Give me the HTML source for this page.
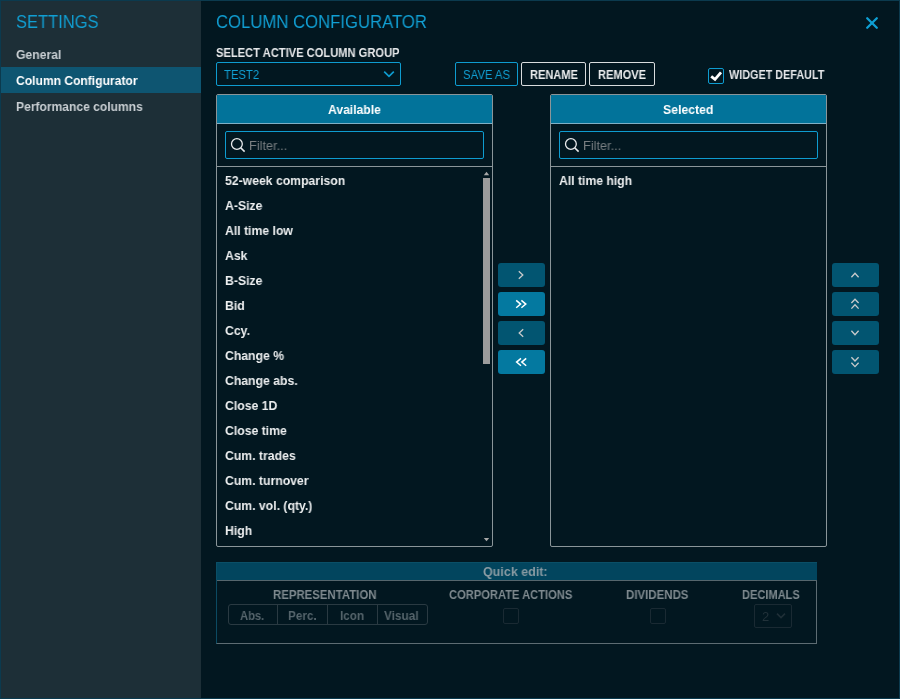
<!DOCTYPE html>
<html><head><meta charset="utf-8">
<style>
*{box-sizing:border-box;margin:0;padding:0}
html,body{width:900px;height:699px;overflow:hidden;background:#021720}
body{position:relative;font-family:"Liberation Sans",sans-serif}
#frame{position:absolute;left:0;top:0;width:900px;height:699px;border:1px solid #0b3a4e}
.a{position:absolute}
.t{position:absolute;white-space:nowrap;line-height:1;transform-origin:0 0;will-change:transform}
.b{font-weight:700}
#side{position:absolute;left:1px;top:1px;width:200px;height:697px;background:#1d2f37}
.panel{position:absolute;top:94px;width:277px;height:453px;border:1px solid #8a9599;border-radius:2px;overflow:hidden}
.phead{position:absolute;left:0;top:0;right:0;height:29px;background:#02739a;border-bottom:1px solid #7fb0c6}
.psep{position:absolute;left:0;right:0;top:71px;height:1px;background:#8a9599}
.filter{position:absolute;top:36px;left:8px;width:259px;height:28px;border:1px solid #0e9cd0;border-radius:2px}
.mbtn svg{display:block}
.mbtn{position:absolute;width:47px;height:24px;border-radius:3px;background:#025571}
.mbtn.on{background:#0479a0}
#list1 .t{transform:scaleX(.94)}
</style></head><body>
<div id="side"></div>
<div class="a" style="left:1px;top:67px;width:200px;height:26px;background:#0e5571"></div>
<div id="frame"></div>

<!-- sidebar texts -->
<span class="t" id="t_settings" style="transform:scaleX(0.917);left:16px;top:13px;font-size:18px;color:#119fd3">SETTINGS</span>
<span class="t b" id="t_general" style="transform:scaleX(0.938);left:16px;top:48px;font-size:13px;color:#c9cfd3">General</span>
<span class="t b" id="t_colconf" style="transform:scaleX(0.929);left:16px;top:74px;font-size:13px;color:#ffffff">Column Configurator</span>
<span class="t b" id="t_perf" style="transform:scaleX(0.929);left:16px;top:100px;font-size:13px;color:#c9cfd3">Performance columns</span>

<!-- main header -->
<span class="t" id="t_title" style="transform:scaleX(0.928);left:216px;top:13px;font-size:18px;color:#119fd3">COLUMN CONFIGURATOR</span>
<svg class="a" style="left:864px;top:15px" width="16" height="16" viewBox="0 0 16 16"><path d="M3.2 3.2L12.8 12.8M12.8 3.2L3.2 12.8" stroke="#0e9fd3" stroke-width="2.3" stroke-linecap="round"/></svg>

<span class="t b" id="t_select" style="transform:scaleX(0.929);left:216px;top:47px;font-size:12px;color:#e6e8ea">SELECT ACTIVE COLUMN GROUP</span>
<div class="a" style="left:216px;top:62px;width:185px;height:24px;border:1px solid #0e9cd0;border-radius:2px"></div>
<span class="t" id="t_test2" style="transform:scaleX(0.868);left:224px;top:68px;font-size:13px;color:#119fd3">TEST2</span>
<svg class="a" style="left:383px;top:69px" width="12" height="9" viewBox="0 0 12 9"><path d="M1.2 2.6L6 7.3L10.8 2.6" fill="none" stroke="#0e9cd0" stroke-width="1.7"/></svg>

<div class="a" style="left:455px;top:62px;width:63px;height:24px;border:1px solid #0e9cd0;border-radius:2px"></div>
<span class="t" id="t_saveas" style="transform:scaleX(0.874);left:463px;top:68px;font-size:13px;color:#119fd3">SAVE AS</span>
<div class="a" style="left:521px;top:62px;width:65px;height:24px;border:1px solid #d8dcde;border-radius:2px"></div>
<span class="t b" id="t_rename" style="transform:scaleX(0.921);left:530px;top:69px;font-size:12px;color:#eceeef">RENAME</span>
<div class="a" style="left:589px;top:62px;width:66px;height:24px;border:1px solid #d8dcde;border-radius:2px"></div>
<span class="t b" id="t_remove" style="transform:scaleX(0.923);left:598px;top:69px;font-size:12px;color:#eceeef">REMOVE</span>

<div class="a" style="left:708px;top:68px;width:16px;height:16px;border:1px solid #0e9cd0;border-radius:2px"></div>
<svg class="a" style="left:708px;top:68px" width="16" height="16" viewBox="0 0 16 16"><path d="M3.2 8.3L7 11.4L13 4.3" fill="none" stroke="#ffffff" stroke-width="2.8"/></svg>
<span class="t b" id="t_widget" style="transform:scaleX(0.901);left:729px;top:69px;font-size:12px;color:#e6e8ea">WIDGET DEFAULT</span>

<!-- Available panel -->
<div class="panel" style="left:216px">
  <div class="phead"></div>
  <div class="filter"></div>
  <div class="psep"></div>
</div>
<span class="t b" id="t_avail" style="transform:scaleX(0.935);left:328px;top:103px;font-size:13px;color:#ffffff">Available</span>
<svg class="a" style="left:229px;top:136px" width="18" height="18" viewBox="0 0 18 18"><circle cx="7.9" cy="8" r="5.4" fill="none" stroke="#e8eaec" stroke-width="1.3"/><path d="M11.8 11.9L15.6 15.6" stroke="#e8eaec" stroke-width="1.5"/></svg>
<span class="t" id="t_filter1" style="transform:scaleX(0.98);left:249px;top:139px;font-size:13px;color:#7a7f82">Filter...</span>

<div class="a" style="left:483px;top:178px;width:7px;height:186px;background:#9c9c9c"></div>
<svg class="a" style="left:483px;top:171px" width="7" height="5" viewBox="0 0 7 5"><path d="M0.8 4.2L3.5 0.8L6.2 4.2Z" fill="#a8a8a8"/></svg>
<svg class="a" style="left:483px;top:537px" width="7" height="5" viewBox="0 0 7 5"><path d="M0.8 1L3.5 4.2L6.2 1Z" fill="#a8a8a8"/></svg>

<div id="list1">
<span class="t b" style="left:225px;top:174px;font-size:13px;color:#eef0f1">52-week comparison</span>
<span class="t b" style="left:225px;top:199px;font-size:13px;color:#eef0f1">A-Size</span>
<span class="t b" style="left:225px;top:224px;font-size:13px;color:#eef0f1">All time low</span>
<span class="t b" style="left:225px;top:249px;font-size:13px;color:#eef0f1">Ask</span>
<span class="t b" style="left:225px;top:274px;font-size:13px;color:#eef0f1">B-Size</span>
<span class="t b" style="left:225px;top:299px;font-size:13px;color:#eef0f1">Bid</span>
<span class="t b" style="left:225px;top:324px;font-size:13px;color:#eef0f1">Ccy.</span>
<span class="t b" style="left:225px;top:349px;font-size:13px;color:#eef0f1">Change %</span>
<span class="t b" style="left:225px;top:374px;font-size:13px;color:#eef0f1">Change abs.</span>
<span class="t b" style="left:225px;top:399px;font-size:13px;color:#eef0f1">Close 1D</span>
<span class="t b" style="left:225px;top:424px;font-size:13px;color:#eef0f1">Close time</span>
<span class="t b" style="left:225px;top:449px;font-size:13px;color:#eef0f1">Cum. trades</span>
<span class="t b" style="left:225px;top:474px;font-size:13px;color:#eef0f1">Cum. turnover</span>
<span class="t b" style="left:225px;top:499px;font-size:13px;color:#eef0f1">Cum. vol. (qty.)</span>
<span class="t b" style="left:225px;top:524px;font-size:13px;color:#eef0f1">High</span>
</div>

<!-- move buttons -->
<div class="mbtn" style="left:498px;top:263px"><svg width="47" height="24" viewBox="0 0 47 24"><path d="M20.8 8.3L24.8 12L20.8 15.7" fill="none" stroke="#c9cbcc" stroke-width="1.3"/></svg></div>
<div class="mbtn on" style="left:498px;top:292px"><svg width="47" height="24" viewBox="0 0 47 24"><path d="M18.2 8.4L22.6 12.1L18.2 15.8M23.4 8.4L27.8 12.1L23.4 15.8" fill="none" stroke="#ffffff" stroke-width="1.5"/></svg></div>
<div class="mbtn" style="left:498px;top:321px"><svg width="47" height="24" viewBox="0 0 47 24"><path d="M25.2 8.3L21.2 12L25.2 15.7" fill="none" stroke="#c9cbcc" stroke-width="1.3"/></svg></div>
<div class="mbtn on" style="left:498px;top:350px"><svg width="47" height="24" viewBox="0 0 47 24"><path d="M23 8.4L18.6 12.1L23 15.8M28.2 8.4L23.8 12.1L28.2 15.8" fill="none" stroke="#ffffff" stroke-width="1.5"/></svg></div>

<!-- Selected panel -->
<div class="panel" style="left:550px">
  <div class="phead"></div>
  <div class="filter"></div>
  <div class="psep"></div>
</div>
<span class="t b" id="t_sel" style="transform:scaleX(0.943);left:663px;top:103px;font-size:13px;color:#ffffff">Selected</span>
<svg class="a" style="left:563px;top:136px" width="18" height="18" viewBox="0 0 18 18"><circle cx="7.9" cy="8" r="5.4" fill="none" stroke="#e8eaec" stroke-width="1.3"/><path d="M11.8 11.9L15.6 15.6" stroke="#e8eaec" stroke-width="1.5"/></svg>
<span class="t" id="t_filter2" style="transform:scaleX(0.98);left:583px;top:139px;font-size:13px;color:#7a7f82">Filter...</span>
<span class="t b" id="t_ath" style="transform:scaleX(0.938);left:559px;top:174px;font-size:13px;color:#eef0f1">All time high</span>

<!-- order buttons -->
<div class="mbtn" style="left:832px;top:263px"><svg width="47" height="24" viewBox="0 0 47 24"><path d="M19.4 14.2L23 10.2L26.6 14.2" fill="none" stroke="#c9cbcc" stroke-width="1.3"/></svg></div>
<div class="mbtn" style="left:832px;top:292px"><svg width="47" height="24" viewBox="0 0 47 24"><path d="M19.4 11L23 7.2L26.6 11M19.4 16.6L23 12.8L26.6 16.6" fill="none" stroke="#c9cbcc" stroke-width="1.3"/></svg></div>
<div class="mbtn" style="left:832px;top:321px"><svg width="47" height="24" viewBox="0 0 47 24"><path d="M19.4 9.8L23 13.8L26.6 9.8" fill="none" stroke="#c9cbcc" stroke-width="1.3"/></svg></div>
<div class="mbtn" style="left:832px;top:350px"><svg width="47" height="24" viewBox="0 0 47 24"><path d="M19.4 7.2L23 11L26.6 7.2M19.4 12.8L23 16.6L26.6 12.8" fill="none" stroke="#c9cbcc" stroke-width="1.3"/></svg></div>

<!-- Quick edit -->
<div class="a" style="left:216px;top:562px;width:601px;height:82px;border:1px solid #5d6c73;border-top:none;border-left-color:#0b4a62"></div>
<div class="a" style="left:216px;top:562px;width:601px;height:18px;background:#02455e;border-top:1px solid #0a4f67;border-left:1px solid #0a4f67"></div>
<div class="a" style="left:217px;top:580px;width:600px;height:1px;background:#56666d"></div>
<span class="t b" id="t_qe" style="transform:scaleX(0.961);left:483px;top:565px;font-size:13px;color:#8a9ba3">Quick edit:</span>
<span class="t b" id="t_rep" style="transform:scaleX(0.95);left:273px;top:589px;font-size:12px;color:#7f8a8f">REPRESENTATION</span>
<span class="t b" id="t_corp" style="transform:scaleX(0.929);left:449px;top:589px;font-size:12px;color:#7f8a8f">CORPORATE ACTIONS</span>
<span class="t b" id="t_div" style="transform:scaleX(0.956);left:626px;top:589px;font-size:12px;color:#7f8a8f">DIVIDENDS</span>
<span class="t b" id="t_dec" style="transform:scaleX(0.921);left:742px;top:589px;font-size:12px;color:#7f8a8f">DECIMALS</span>
<div class="a" style="left:228px;top:604px;width:200px;height:21px;border:1px solid #2a3a42;border-radius:3px"></div>
<div class="a" style="left:277px;top:605px;width:1px;height:19px;background:#2a3a42"></div>
<div class="a" style="left:327px;top:605px;width:1px;height:19px;background:#2a3a42"></div>
<div class="a" style="left:377px;top:605px;width:1px;height:19px;background:#2a3a42"></div>
<span class="t b" id="t_abs" style="transform:scaleX(0.861);left:240px;top:609px;font-size:13px;color:#56656c">Abs.</span>
<span class="t b" id="t_perc" style="transform:scaleX(0.9);left:288px;top:609px;font-size:13px;color:#56656c">Perc.</span>
<span class="t b" id="t_icon" style="transform:scaleX(0.904);left:340px;top:609px;font-size:13px;color:#56656c">Icon</span>
<span class="t b" id="t_visual" style="transform:scaleX(0.908);left:384px;top:609px;font-size:13px;color:#56656c">Visual</span>
<div class="a" style="left:503px;top:608px;width:16px;height:16px;border:1px solid #1a2a33;border-radius:2px"></div>
<div class="a" style="left:650px;top:608px;width:16px;height:16px;border:1px solid #1a2a33;border-radius:2px"></div>
<div class="a" style="left:754px;top:604px;width:38px;height:24px;border:1px solid #1a2a33;border-radius:2px"></div>
<span class="t" id="t_two" style="left:762px;top:610px;font-size:13px;color:#22323a">2</span>
<svg class="a" style="left:776px;top:612px" width="10" height="8" viewBox="0 0 10 8"><path d="M1 1.6L5 5.6L9 1.6" fill="none" stroke="#1f2f37" stroke-width="1.6"/></svg>
</body></html>
